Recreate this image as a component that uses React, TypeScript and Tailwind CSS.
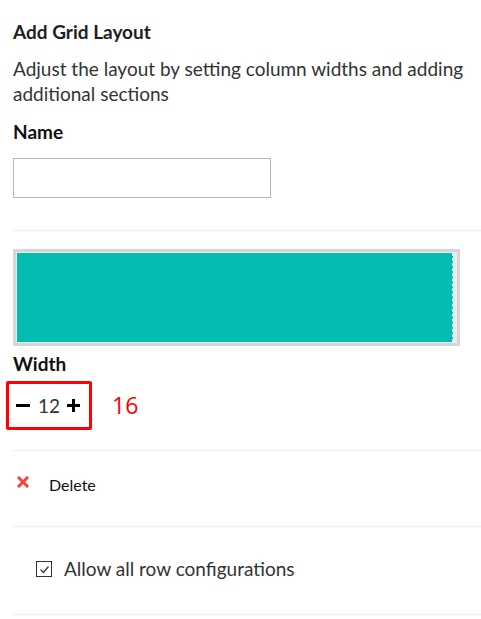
import React from 'react';

export default function App() {
  return (
    <div className="w-[481px] min-h-[619px] bg-white font-['Lato',sans-serif] text-[#222]">
      {/* Header */}
      <div className="pl-[13px] pt-[20px]">
        <h1 className="text-[19px] font-bold leading-[24px] text-[#1e1e1e]">Add Grid Layout</h1>
        <p className="mt-[12px] text-[19px] leading-[25px] text-[#333] pr-4">
          Adjust the layout by setting column widths and adding additional sections
        </p>
        <div className="mt-[14px] text-[19px] font-bold leading-[24px] text-[#111]">Name</div>
        <input
          type="text"
          className="mt-[14px] block w-[258px] h-[40px] border border-[#b5b5b5] bg-white outline-none"
        />
      </div>

      <div className="ml-[13px] mt-[32px] border-t border-[#eeeeee]" />

      {/* Grid preview */}
      <div className="pl-[13px] pt-[18px]">
        <div className="w-[447px] h-[97px] border-[3px] border-[#d6d6d6] bg-[#ebebeb] p-[1px] pr-[4px]">
          <div className="h-full bg-[#04bdb2] border-r border-dashed border-[#d4f2ef]" />
        </div>
        <div className="mt-[6px] text-[19px] font-bold leading-[24px] text-[#111]">Width</div>
      </div>

      <div className="flex items-center pl-[6px] mt-[5px]">
        <div className="flex items-center w-[86px] h-[49px] border-[3px] border-[#ff0000] rounded-[2px] pl-[7px]">
          <span className="w-[14px] h-[3px] bg-black" />
          <span className="ml-[8px] text-[19px] text-[#333] leading-none">12</span>
          <span className="relative ml-[7px] w-[13px] h-[13px]">
            <span className="absolute left-0 top-[5px] w-[13px] h-[3px] bg-black" />
            <span className="absolute top-0 left-[5px] w-[3px] h-[13px] bg-black" />
          </span>
        </div>
        <span className="ml-[20px] text-[23px] text-[#ff0000] leading-none font-['Open_Sans',sans-serif]">16</span>
      </div>

      <div className="ml-[13px] mt-[20px] border-t border-[#eeeeee]" />

      {/* Delete */}
      <div className="flex items-start pl-[17px] pt-[23px] h-[75px]">
        <svg width="12" height="12" viewBox="0 0 12 12" className="mt-[2px]">
          <path d="M2 2 L10 10 M10 2 L2 10" stroke="#f44336" strokeWidth="3" strokeLinecap="square" />
        </svg>
        <span className="ml-[20px] mt-[1px] text-[16px] leading-[20px] text-[#111]">Delete</span>
      </div>

      <div className="ml-[13px] border-t border-[#eeeeee]" />

      {/* Checkbox */}
      <label className="flex items-start pl-[36px] pt-[31px] h-[87px]">
        <span className="w-[16px] h-[16px] border border-[#333] flex items-center justify-center mt-[3px]">
          <svg width="11" height="9" viewBox="0 0 11 9">
            <path d="M1.5 4.5 L4.5 7.5 L9.5 1.5" fill="none" stroke="#333" strokeWidth="1.2" />
          </svg>
        </span>
        <span className="ml-[12px] text-[19px] leading-[22px] text-[#333]">Allow all row configurations</span>
      </label>

      <div className="ml-[13px] border-t border-[#eeeeee]" />
    </div>
  );
}
